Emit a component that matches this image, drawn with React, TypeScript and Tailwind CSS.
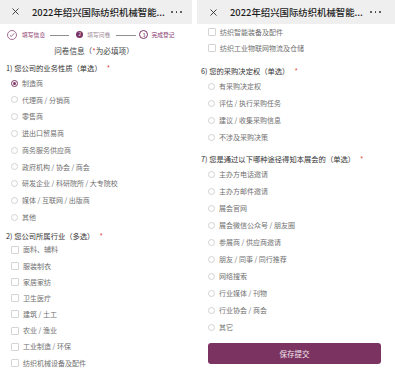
import React from 'react';

const PURPLE = '#7c3363';

const bizTypes = [
  '制造商',
  '代理商 / 分销商',
  '零售商',
  '进出口贸易商',
  '商务服务供应商',
  '政府机构 / 协会 / 商会',
  '研发企业 / 科研院所 / 大专院校',
  '媒体 / 互联网 / 出版商',
  '其他',
];

const industries = [
  '面料、辅料',
  '服装制衣',
  '家居家纺',
  '卫生医疗',
  '建筑 / 土工',
  '农业 / 渔业',
  '工业制造 / 环保',
  '纺织机械设备及配件',
];

const buyPower = ['有采购决定权', '评估 / 执行采购任务', '建议 / 收集采购信息', '不涉及采购决策'];

const channels = [
  '主办方电话邀请',
  '主办方邮件邀请',
  '展会官网',
  '展会微信公众号 / 朋友圈',
  '参展商 / 供应商邀请',
  '朋友 / 同事 / 同行推荐',
  '网络搜索',
  '行业媒体 / 刊物',
  '行业协会 / 商会',
  '其它',
];

const font = { fontFamily: '"Noto Sans CJK SC", "Noto Sans", sans-serif' };

const Header = ({ pad }: { pad: string }) => {
  return (
    <div className={`h-[24px] bg-[#efefef] flex items-center ${pad}`}>
      <svg width="7" height="7" viewBox="0 0 7 7" className="shrink-0">
        <path d="M0.5 0.5 L6.5 6.5 M6.5 0.5 L0.5 6.5" stroke="#333" strokeWidth="0.9" fill="none" />
      </svg>
      <div className="ml-[13px] text-[9.4px] font-medium text-[#1c1c1c] whitespace-nowrap">
        2022年绍兴国际纺织机械智能...
      </div>
      <div className="flex-1" />
      <div className="flex gap-[3px] items-center shrink-0">
        <div className="w-[1.6px] h-[1.6px] rounded-full bg-[#333]"></div>
        <div className="w-[1.6px] h-[1.6px] rounded-full bg-[#333]"></div>
        <div className="w-[1.6px] h-[1.6px] rounded-full bg-[#333]"></div>
      </div>
    </div>
  );
};

const Radio = ({ label, checked, h }: { label: string; checked?: boolean; h: string }) => {
  return (
    <div className={`${h} flex items-center`}>
      {checked ? (
        <div className="w-[7px] h-[7px] rounded-full border border-[#7c3363] flex items-center justify-center shrink-0">
          <div className="w-[3px] h-[3px] rounded-full bg-[#7c3363]"></div>
        </div>
      ) : (
        <div className="w-[7px] h-[7px] rounded-full border border-[#d2d2d2] shrink-0"></div>
      )}
      <span className="ml-[4px] text-[7px] text-[#707070] whitespace-nowrap">{label}</span>
    </div>
  );
};

const Check = ({ label, h }: { label: string; h: string }) => {
  return (
    <div className={`${h} flex items-center`}>
      <div className="w-[8px] h-[8px] rounded-[1px] border border-[#d4d4d4] shrink-0"></div>
      <span className="ml-[4px] text-[7px] text-[#707070] whitespace-nowrap">{label}</span>
    </div>
  );
};

const Title = ({ text, cls }: { text: string; cls: string }) => {
  return (
    <div className={`${cls} flex items-center text-[7.3px] text-[#333] whitespace-nowrap`}>
      {text}
      <span className="ml-[5px] text-[#e0453a]">*</span>
    </div>
  );
};

const Steps = () => {
  return (
    <div className="h-[22px] flex items-center pl-[7px] text-[5.8px] whitespace-nowrap">
      <svg width="10" height="10" viewBox="0 0 10 10" className="shrink-0">
        <circle cx="5" cy="5" r="4.5" stroke={PURPLE} strokeWidth="0.7" fill="none" />
        <path d="M2.8 5.2 L4.3 6.6 L7.2 3.3" stroke={PURPLE} strokeWidth="0.7" fill="none" />
      </svg>
      <span className="ml-[5px] text-[#8a3a70]">填写信息</span>
      <div className="ml-[5px] w-[19px] h-[0.6px] bg-[#8f8f8f]"></div>
      <div className="ml-[7px] w-[7px] h-[7px] rounded-full bg-[#7c3363] text-white text-[4.5px] flex items-center justify-center">2</div>
      <span className="ml-[4px] text-[#a08a98]">填写问卷</span>
      <div className="ml-[6px] w-[20px] h-[0.6px] bg-[#8f8f8f]"></div>
      <div className="ml-[3px] w-[9px] h-[9px] rounded-full border-[0.7px] border-[#7c3363] text-[#7c3363] text-[5px] flex items-center justify-center">3</div>
      <span className="ml-[3px] text-[#8a3a70]">完成登记</span>
    </div>
  );
};

export default function App() {
  return (
    <div className="w-[395px] h-[371px] bg-white flex overflow-hidden" style={font}>
      {/* left screen */}
      <div className="w-[192px] shrink-0 flex flex-col">
        <Header pad="pl-[12px] pr-[10px]" />
        <Steps />
        <div className="h-[10px] flex items-center justify-center text-[7.6px] text-[#444] pr-[4px]">
          问卷信息（<span className="text-[#e0453a]">*</span>为必填项）
        </div>
        <Title text="1) 您公司的业务性质（单选）" cls="mt-[7px] h-[12px] pl-[6px]" />
        <div className="pl-[11px] flex flex-col">
          {bizTypes.map((b, i) => (
            <Radio key={b} label={b} checked={i === 0} h="h-[16.75px]" />
          ))}
        </div>
        <Title text="2) 您公司所属行业（多选）" cls="mt-[6px] h-[10px] pl-[6px]" />
        <div className="pl-[11px] flex flex-col">
          {industries.map((b) => (
            <Check key={b} label={b} h="h-[16.2px]" />
          ))}
        </div>
      </div>

      <div className="w-[5px] shrink-0"></div>

      {/* right screen */}
      <div className="w-[198px] shrink-0 flex flex-col">
        <Header pad="pl-[13px] pr-[14px]" />
        <div className="pl-[11px] flex flex-col">
          <Check label="纺织智能装备及配件" h="h-[16px]" />
          <Check label="纺织工业物联网物流及仓储" h="h-[16px]" />
        </div>
        <Title text="6) 您的采购决定权（单选）" cls="mt-[8px] h-[14px] pl-[4px]" />
        <div className="pl-[11px] flex flex-col">
          {buyPower.map((b) => (
            <Radio key={b} label={b} h="h-[17px]" />
          ))}
        </div>
        <Title text="7) 您是通过以下哪种途径得知本展会的（单选）" cls="mt-[6px] h-[14px] pl-[4px]" />
        <div className="pl-[11px] flex flex-col">
          {channels.map((b) => (
            <Radio key={b} label={b} h="h-[17px]" />
          ))}
        </div>
        <div className="mt-[7px] ml-[11px] w-[173px] h-[21px] rounded-[3px] bg-[#7b3461] flex items-center justify-center text-[7.5px] text-[#f3e6ee]">
          保存提交
        </div>
      </div>
    </div>
  );
}
